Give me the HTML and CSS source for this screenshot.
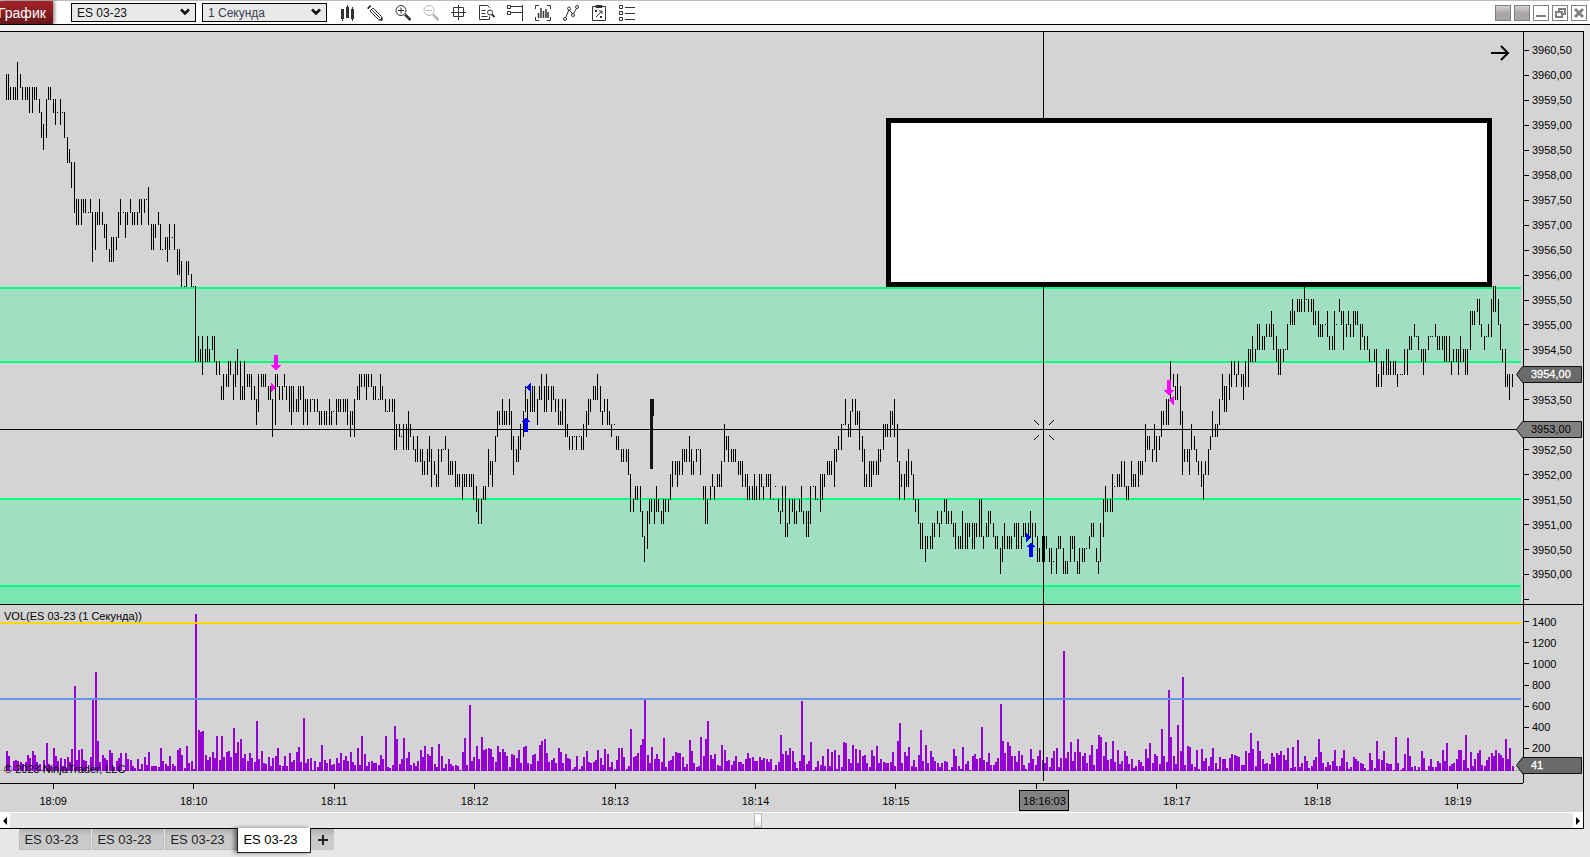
FILE: index.html
```html
<!DOCTYPE html>
<html lang="ru">
<head>
  <meta charset="UTF-8">
  <title>График ES 03-23</title>
  <link rel="stylesheet" href="styles.css">
</head>
<body>

<header class="toolbar">
  <span class="app-label">График</span>
  <div class="select">
    <select aria-label="Инструмент"><option>ES 03-23</option></select>
    <svg width="10" height="8" viewBox="0 0 10 8"><path d="M1 1.5l4 4 4-4" fill="none" stroke="#111" stroke-width="2.6"/></svg>
  </div>
  <div class="select select-interval">
    <select aria-label="Интервал"><option>1 Секунда</option></select>
    <svg width="10" height="8" viewBox="0 0 10 8"><path d="M1 1.5l4 4 4-4" fill="none" stroke="#111" stroke-width="2.6"/></svg>
  </div>

  <nav class="tools">
    <button title="Стиль графика"><svg viewBox="0 0 16 16"><path fill="#333" d="M2 4h3v10H4v2H3v-2H2zM7 2h1V0h1v2h1v11H7zM12 4h1V2h1v2h1v10h-1v2h-1v-2h-1z"/></svg></button>
    <button title="Рисование"><svg viewBox="0 0 16 16"><path d="M1 4l3-3M3 6l3-3M3 6l8.500 8.500 3.500.5-.5-3.500L6 3M4.500 4.500l8.500 8.500" fill="none" stroke="#333"/><path d="M0 3l3-3 1 1-3 3zM12 15.500l3.700.2-.2-3.700z" fill="#333"/></svg></button>
    <button title="Увеличить"><svg viewBox="0 0 16 16" fill="none" stroke="#333"><circle cx="6" cy="5.500" r="5"/><path d="M3 5.500h6M6 2.500v6" /><path d="M10 9.500l5.500 5.500" stroke-width="2.500"/></svg></button>
    <button title="Уменьшить" disabled><svg viewBox="0 0 16 16" fill="none" stroke="#b4b4b4"><circle cx="6" cy="5.500" r="5"/><path d="M3 5.500h6"/><path d="M10 9.500l5.500 5.500" stroke-width="2.500"/></svg></button>
    <button title="Перекрестие"><svg viewBox="0 0 16 16" fill="none" stroke="#333"><path d="M2.500 2.500h10v9h-10zM0 7.500h15M7.500 0v15"/></svg></button>
    <button title="Данные"><svg viewBox="0 0 16 16" fill="none" stroke="#333"><path d="M10.500 3V2.500l-2-2h-8v14h10v-3M2.500 5.500h4M2.500 8.500h4M2.500 11.500h6"/><circle cx="11" cy="7.500" r="2.500"/><path d="M13 9.500l2.500 2.500" stroke-width="2"/></svg></button>
    <button title="Шкала"><svg viewBox="0 0 16 16" fill="none" stroke="#333"><path d="M.5.5h3v3h-3zM.5 6.500h3v3h-3zM4 1.500h12M4 7.500h12M15.500 0v16"/></svg></button>
    <button title="Индикаторы"><svg viewBox="0 0 16 16" fill="none" stroke="#333"><path d="M4 .5H.5V4M12 .5h3.500V4M.5 12v3.500H4M15.500 12v3.500H12"/><path d="M3.500 13V8M6 13V3M8.500 13V6M11 13V4M13 13V7" stroke-width="1.500"/></svg></button>
    <button title="Стратегии"><svg viewBox="0 0 16 16" fill="none" stroke="#333"><path d="M2.500 13L6 4.500l4 5 4-7"/><g fill="#fff"><circle cx="2" cy="14" r="1.500"/><circle cx="6" cy="3.500" r="1.500"/><circle cx="10" cy="10" r="1.500"/><circle cx="14" cy="2" r="1.500"/></g></svg></button>
    <button title="Трейдер"><svg viewBox="0 0 16 16" fill="none" stroke="#333"><path d="M1.500 1.500h13v14h-13zM5 .5h6v2H5zM4 5l2 2M6 5L4 7M8 6l3 0 0 3M11 6L5 12M9 11l2 2M11 11l-2 2"/></svg></button>
    <button title="Свойства"><svg viewBox="0 0 16 16" fill="none" stroke="#333"><path d="M.5.500h3v3h-3zM.5 6.500h3v3h-3zM.5 12.500h3v3h-3zM6 2.500h10M6 8.500h10M6 14.500h10"/></svg></button>
  </nav>

  <div class="window-buttons">
    <button class="filled" title="Связь инструмента"></button>
    <button class="filled" title="Связь интервала"></button>
    <button title="Свернуть"><svg viewBox="0 0 14 14"><path d="M2 10h10" stroke="#808080" stroke-width="2"/></svg></button>
    <button title="Развернуть"><svg viewBox="0 0 14 14" fill="none" stroke="#808080" stroke-width="2"><path d="M6 5V3h6v5H9M3 6h6v5H3z"/></svg></button>
    <button title="Закрыть"><svg viewBox="0 0 14 14"><path d="M3 3l8 8M11 3l-8 8" stroke="#808080" stroke-width="3"/></svg></button>
  </div>
</header>

<main class="chart">
  <section class="panel price-panel">
    <div class="plot">
      <svg viewBox="0 0 1523 572" preserveAspectRatio="none" shape-rendering="crispEdges">
        <!-- zones -->
        <path fill="#a0dfc1" d="M0 255h1521v75H0zM0 466h1521v88H0z"/>
        <path fill="#7be7b0" d="M0 555h1521v17H0z"/>
        <path fill="#00ff7f" d="M0 255h1521v2H0zM0 329h1521v2H0zM0 466h1521v2H0zM0 553h1521v2H0z"/>
        <path id="priceBars"/>
        <path fill="#141414" d="M650 367h4v17h-1v53h-3z"/>
        <!-- crosshair -->
        <path d="M0 397h1518v1H0zM1043 0h1v572h-1z"/>
        <path d="M1034 388l5 5M1054 388l-5 5M1034 408l5-5M1054 408l-5-5" stroke="#000"/>
        <!-- trades -->
        <g fill="#f0f">
          <path d="M274 323h4v10h3l-5 5-5-5h3zM271 350l5 5-5 5z"/>
          <path d="M1167 348h4v10h3l-5 5-5-5h3zM1174 363l-5 5 5 5z"/>
        </g>
        <g fill="#00f">
          <path d="M524 400h4v-10h3l-5-5-5 5h3zM531 350l-5 5 5 5z"/>
          <path d="M1029 525h4v-10h3l-5-5-5 5h3zM1026 500l5 5-5 5z"/>
        </g>
        <rect x="888.500" y="88.500" width="601" height="164" fill="#fff" stroke="#000" stroke-width="5"/>
        <path d="M1491 21h17M1501 14l7 7-7 7" fill="none" stroke="#000" stroke-width="2" shape-rendering="auto"/>
      </svg>
    </div>
    <div class="axis price-axis">
      <ul>
        <li>3960,50</li><li>3960,00</li><li>3959,50</li><li>3959,00</li><li>3958,50</li><li>3958,00</li>
        <li>3957,50</li><li>3957,00</li><li>3956,50</li><li>3956,00</li><li>3955,50</li><li>3955,00</li>
        <li>3954,50</li><li></li><li>3953,50</li><li></li><li>3952,50</li><li>3952,00</li>
        <li>3951,50</li><li>3951,00</li><li>3950,50</li><li>3950,00</li><li></li>
      </ul>
      <div class="tag tag-last"><svg viewBox="0 0 66 17"><path d="M.5 8.500l6-8h59v16h-59z"/></svg><span>3954,00</span></div>
      <div class="tag tag-cursor"><svg viewBox="0 0 66 17"><path d="M.5 8.500l6-8h59v16h-59z"/></svg><span>3953,00</span></div>
    </div>
  </section>

  <section class="panel volume-panel">
    <div class="plot">
      <svg viewBox="0 0 1523 178" preserveAspectRatio="none" shape-rendering="crispEdges">
        <path fill="#aaa" d="M0 165h1521v1H0z"/>
        <path id="volumeBars" fill="#9400d3"/>
        <path fill="#ffd700" d="M0 17h1521v2H0z"/>
        <path fill="#6495ed" d="M0 93h1521v2H0z"/>
        <path d="M1043 0h1v176h-1z"/>
      </svg>
      <span class="indicator-name">VOL(ES 03-23 (1 Секунда))</span>
      <span class="copyright">© 2023 NinjaTrader, LLC</span>
    </div>
    <div class="axis volume-axis">
      <ul>
        <li>1400</li><li>1200</li><li>1000</li><li>800</li><li>600</li><li>400</li><li>200</li><li></li>
      </ul>
      <div class="tag tag-volume"><svg viewBox="0 0 66 17"><path d="M.5 8.500l6-8h59v16h-59z"/></svg><span>41</span></div>
    </div>
  </section>

  <div class="time-axis">
    <ul>
      <li>18:09</li><li>18:10</li><li>18:11</li><li>18:12</li><li>18:13</li><li>18:14</li>
      <li>18:15</li><li></li><li>18:17</li><li>18:18</li><li>18:19</li>
    </ul>
    <span class="time-cursor">18:16:03</span>
  </div>

  <div class="scrollbar">
    <button title="Назад"><svg viewBox="0 0 10 14"><path d="M7 3v8L3 7z"/></svg></button>
    <div class="track"><div class="thumb"></div></div>
    <button title="Вперёд"><svg viewBox="0 0 10 14"><path d="M3 3v8l4-4z"/></svg></button>
  </div>
</main>

<footer class="tabs">
  <button>ES 03-23</button>
  <button>ES 03-23</button>
  <button>ES 03-23</button>
  <button class="active">ES 03-23</button>
  <button class="add" title="Новая вкладка"><svg viewBox="0 0 10 10"><path d="M0 5h10M5 0v10" stroke="#222" stroke-width="2"/></svg></button>
</footer>

<script src="chart.js"></script>
</body>
</html>
```
FILE: styles.css
```css
* {
  box-sizing: border-box;
}
body {
  margin: 0;
  height: 100vh;
  display: flex;
  flex-direction: column;
  overflow: hidden;
  background: #e6e7e9;
  color: #000;
  font-family: "Liberation Sans", Arial, sans-serif;
  font-size: 11px;
}
button {
  padding: 0;
  border: none;
  background: none;
  font-family: inherit;
  color: inherit;
}
ul {
  list-style: none;
  margin: 0;
  padding: 0;
}
svg {
  display: block;
}

/* toolbar */
.toolbar {
  flex: none;
  height: 25px;
  display: flex;
  align-items: center;
  background: #fff;
  border-top: 1px solid #bcbcbc;
  border-bottom: 1px solid #000;
}
.app-label {
  width: 53px;
  height: 23px;
  margin-right: 18px;
  line-height: 24px;
  font-size: 14px;
  color: #fff;
  text-indent: -2px;
  background: linear-gradient(#a52327, #67171a);
  box-shadow: 2px 0 3px rgba(0,0,0,0.4);
}
.select {
  position: relative;
  width: 125px;
  height: 19px;
  margin-right: 6px;
}
.select select {
  width: 100%;
  height: 100%;
  padding: 0 5px;
  border: 1px solid #000;
  border-radius: 0;
  appearance: none;
  background: #e8eaea;
  color: #111;
  font-family: inherit;
  font-size: 12px;
}
.select-interval select {
  color: #3c3c50;
}
.select svg {
  position: absolute;
  right: 6px;
  top: 5px;
  pointer-events: none;
}
.tools {
  display: flex;
}
.tools button {
  width: 28px;
  height: 16px;
}
.tools svg {
  width: 16px;
  height: 16px;
  margin: 0 auto;
}
.window-buttons {
  display: flex;
  gap: 3px;
  margin-left: auto;
  margin-right: 3px;
}
.window-buttons button {
  width: 16px;
  height: 16px;
  border: 1px solid #808080;
}
.window-buttons .filled {
  background: linear-gradient(#d6d4d4, #aaa6a6 50%);
}

/* chart */
.chart {
  flex: 1;
  min-height: 0;
  display: flex;
  flex-direction: column;
  margin: 6px 6px 0 0;
  border: 1px solid #000;
  border-left: none;
  background: #d4d4d4;
  box-shadow: 0 -6px 0 #f0f1f1;
}
.panel {
  display: grid;
  grid-template-columns: 1fr 60px;
  min-height: 0;
}
.price-panel {
  flex: 573;
  border-bottom: 1px solid #000;
}
.volume-panel {
  flex: 179;
}
.plot {
  position: relative;
  min-height: 0;
}
.plot svg {
  width: 100%;
  height: 100%;
}
.volume-panel .plot {
  border-bottom: 1px solid #000;
}
.indicator-name,
.copyright {
  position: absolute;
  left: 4px;
  line-height: 14px;
}
.indicator-name {
  top: 4px;
}
.copyright {
  bottom: 7px;
}

/* price and volume scales */
.axis {
  position: relative;
  min-height: 0;
  border-left: 1px solid #000;
}
.axis ul {
  height: 100%;
  display: flex;
  flex-direction: column;
}
.axis li {
  flex: 1;
  display: flex;
  align-items: center;
}
.axis li::before {
  content: "";
  width: 5px;
  height: 1px;
  margin-right: 3px;
  background: #000;
}
.price-axis ul {
  padding-top: 6px;
  margin-bottom: -8px;
  height: 580px;
}
.volume-axis ul {
  padding: 6px 0 3px;
}
.volume-axis {
  margin-bottom: 1px;
}
.tag {
  position: absolute;
  right: 1px;
  width: 66px;
  height: 17px;
}
.tag svg {
  position: absolute;
  fill: #6a6a6a;
  stroke: #111;
}
.tag span {
  position: relative;
  display: block;
  padding-left: 15px;
  line-height: 17px;
}
.tag-last {
  top: 334px;
  color: #fff;
}
.tag-cursor {
  top: 389px;
}
.tag-cursor svg {
  fill: #828282;
}
.tag-volume {
  bottom: 9px;
  color: #fff;
}
.tag-last span,
.tag-volume span {
  -webkit-text-stroke: 0.3px #fff;
}

/* time scale */
.time-axis {
  position: relative;
  flex: none;
  height: 28px;
  overflow: hidden;
}
.time-axis ul {
  display: grid;
  grid-template-columns: repeat(11, 1fr);
  margin: 0 55px 0 -17px;
}
.time-axis li {
  display: flex;
  flex-direction: column;
  align-items: center;
  line-height: 14px;
}
.time-axis li::before {
  content: "";
  width: 1px;
  height: 5px;
  margin-bottom: 5px;
  background: #000;
}
.time-cursor {
  position: absolute;
  left: 64.400%;
  top: 6px;
  width: 50px;
  height: 21px;
  line-height: 20px;
  text-align: center;
  border: 1px solid #000;
  background: #828282;
}

.scrollbar {
  flex: none;
  height: 16px;
  display: flex;
  border-top: 1px solid #fff;
  background: #e4e4e4;
}
.scrollbar button {
  width: 10px;
  background: #fff;
}
.track {
  flex: 1;
}
.thumb {
  width: 8px;
  height: 15px;
  margin-left: 47.600%;
  border: 1px solid #b8b8b8;
  background: linear-gradient(#fff 45%, #dcdcdc);
}

/* tabs */
.tabs {
  flex: none;
  height: 28px;
  display: flex;
  align-items: flex-start;
  gap: 1px;
  padding-left: 19px;
}
.tabs button {
  width: 72px;
  height: 21px;
  padding-right: 7px;
  font-size: 13px;
  color: #222;
  background: linear-gradient(#b0b0b0, #cacaca 35%);
  border: 1px solid #bbb;
  border-top: none;
}
.tabs .active {
  position: relative;
  width: 74px;
  height: 25px;
  margin: -1px 0 0 -1px;
  padding-bottom: 2px;
  color: #000;
  background: #fff;
  border: 1px solid #222;
  border-top: none;
  box-shadow: -3px 0 4px rgba(0,0,0,0.45);
}
.tabs .add {
  width: 23px;
  margin-left: -1px;
  padding: 0;
  border: none;
}
.add svg {
  width: 10px;
  height: 10px;
  margin: 0 auto;
}
```
FILE: chart.js
```js
// one bar per second, high-low in ticks down from 3960,50 (30 bars per line)
const bars = `
2-4 2-4 3-4 3-4 3-4 1-4 2-3 3-4 3-4 3-4 3-5 3-5 3-4 3-4 4-5 5-7 6-8 4-7 3-4 3-4 4-5 4-6 5-5 4-6 5-5 5-7 7-9 8-9 9-11 9-13
12-14 12-14 12-14 12-13 12-13 13-13 12-13 13-17 13-16 13-14 12-14 13-14 14-15 14-16 16-17 15-17 15-17 15-16 13-15 12-14 13-13 13-15 13-14 12-13 13-14 13-14 13-14 12-13 12-14 12-13
12-12 11-14 14-16 14-16 14-15 13-14 14-16 16-16 15-16 15-17 14-16 15-15 14-16 16-18 16-18 17-19 19-19 17-19 17-18 18-19 19-19 19-25 23-25 24-25 23-26 24-25 23-25 24-25 23-24 23-25
25-26 25-26 27-28 26-28 26-27 25-27 25-26 26-28 25-27 24-26 25-28 27-28 25-28 26-27 26-27 26-28 27-28 28-30 26-29 26-27 26-27 26-27 27-28 27-28 28-31 26-30 26-27 27-28 27-28 26-27
27-28 27-29 27-30 27-29 28-29 27-29 27-28 27-30 28-29 28-30 28-29 28-28 28-29 28-29 29-30 29-30 29-30 29-30 28-30 29-30 29-29 28-30 28-29 28-29 28-29 28-29 28-30 29-31 29-30 28-31
27-28 26-28 26-27 26-27 26-28 26-27 26-27 27-28 27-28 28-28 26-28 27-28 28-29 29-29 28-29 28-29 28-32 30-32 30-31 31-31 30-32 30-32 29-32 30-31 31-32 32-33 31-33 32-33 32-34 33-34
32-34 31-33 32-35 33-34 34-35 32-35 32-33 32-32 31-32 32-34 33-34 33-34 33-35 34-35 34-35 34-36 34-35 34-35 34-35 34-35 34-36 35-37 36-38 36-38 35-36 35-36 32-35 33-34 33-35 31-33
29-31 29-30 28-30 29-30 29-30 28-30 29-32 31-34 32-33 31-33 30-32 29-31 27-29 28-30 27-29 27-29 27-29 28-30 27-28 26-28 27-29 26-29 27-28 27-29 27-28 28-29 28-30 29-30 28-30 28-31
30-31 31-32 31-32 31-31 31-32 31-31 31-32 30-32 29-31 28-30 28-29 27-28 27-28 26-28 27-29 29-30 28-29 28-30 29-30 30-31 30-30 31-32 31-32 32-33 32-33 32-33 32-34 34-37 36-37 35-36
35-36 35-37 37-39 39-41 37-40 36-38 36-37 36-38 35-37 36-37 37-38 36-38 36-37 36-37 34-36 33-35 33-34 33-35 33-34 32-34 32-33 32-33 31-33 32-34 33-34 32-33 32-32 32-34 35-36 35-38
36-38 35-36 34-35 35-36 34-35 34-35 33-35 30-33 31-32 31-33 32-33 32-33 32-33 33-34 33-34 33-35 34-35 34-36 35-36 35-36 34-36 35-36 34-36 34-35 35-36 34-35 34-35 34-36 36-36 35-35
36-37 37-38 35-37 35-39 38-39 36-38 36-37 36-38 37-38 36-37 35-37 37-38 37-39 37-39 35-38 35-35 35-36 36-36 34-37 34-36 34-35 33-34 33-34 33-34 32-35 32-33 31-32 30-32 30-30 28-30
30-31 29-31 28-29 28-30 29-30 29-32 31-33 32-35 34-35 33-35 33-35 33-34 33-34 32-34 32-33 30-32 30-31 30-31 29-31 29-30 28-31 30-33 33-36 34-35 34-36 33-35 32-35 33-34 34-36 36-37
36-38 38-40 38-40 39-41 39-40 39-40 38-40 38-39 37-38 38-39 37-38 36-37 36-38 37-38 37-38 38-39 38-40 39-40 39-40 37-40 38-40 38-40 38-39 38-40 38-40 38-39 36-39 36-39 39-40 38-39
37-39 37-38 38-39 39-40 39-40 40-42 39-41 38-40 39-40 39-40 39-40 38-39 38-40 38-40 39-40 38-39 38-39 38-39 37-39 38-40 38-39 39-41 40-41 39-41 39-41 39-40 40-41 40-42 41-41 40-42
39-40 39-40 40-42 41-42 41-42 39-41 39-40 39-41 41-42 40-42 40-41 40-41 40-40 39-40 38-39 38-39 40-41 41-42 38-41 36-39 35-37 36-37 36-37 34-37 35-35 34-35 34-35 33-35 33-35 35-36
35-36 33-35 34-35 34-35 33-35 33-34 33-34 30-33 31-32 31-32 32-33 30-32 31-33 31-32 29-31 29-30 28-30 28-30 25-28 26-27 27-28 26-28 27-30 29-34 32-33 32-33 32-34 30-32 31-32 32-33
33-34 33-35 34-36 33-34 32-34 31-32 29-31 30-31 30-31 28-30 26-28 27-29 27-29 26-28 25-27 25-26 26-27 25-26 26-27 26-28 25-27 24-27 24-25 23-25 24-25 22-24 22-24 23-24 23-24 22-23
22-23 21-23 22-24 23-25 24-26 24-26 24-25 24-24 22-24 21-22 20-22 21-22 20-21 20-21 20-21 19-21 20-20 20-21 20-21 20-22 21-22 21-23 22-23 22-23 22-22 21-23 23-24 23-24 21-24 22-22
20-21 21-22 21-24 22-23 21-22 22-23 21-23 21-22 21-22 22-24 22-23 23-24 23-24 24-25 25-25 24-25 24-27 26-27 25-27 25-26 24-26 24-26 25-26 25-26 25-26 26-27 26-26 26-26 24-26 24-26
23-24 23-24 22-23 23-23 23-24 24-25 24-26 24-25 23-24 23-23 23-23 22-23 23-24 23-24 23-24 23-25 23-25 23-25 25-26 24-25 24-25 24-26 23-25 24-25 24-26 24-26 21-24 21-22 21-22 20-21
20-22 22-23 23-24 23-23 22-23 20-23 19-21 19-21 20-22 22-24 24-25 24-27 26-27 26-28 26-27
`;

// bar heights of the volume panel
const volume = `
20 15 0 10 11 10 9 7 9 16 13 20 16 9 7 1 11 28 7 5 23 15 10 13 5 12 14 9 22 86
11 21 22 11 10 1 14 73 100 30 9 16 13 11 21 18 4 10 13 18 1 18 12 11 5 3 12 2 7 14
6 19 5 5 5 4 23 10 7 5 15 7 5 21 23 16 3 25 8 10 2 159 42 40 41 16 11 14 19 13
36 11 35 14 19 20 14 44 18 29 32 13 17 10 18 13 9 51 12 20 8 7 14 5 13 15 23 6 5 15
5 18 9 11 19 24 9 54 8 12 13 1 10 4 9 26 11 8 12 6 7 13 8 18 11 15 10 19 9 6
23 6 36 17 5 9 10 8 8 6 16 12 36 4 3 6 46 32 7 12 33 13 19 6 8 5 10 21 14 25
17 15 24 7 4 27 15 3 7 12 7 5 6 5 1 19 33 6 67 10 14 25 12 34 21 22 23 22 14 9
25 19 22 19 15 4 17 16 13 21 8 24 25 8 7 16 17 10 26 30 32 18 9 11 13 8 23 19 8 17
13 12 2 4 15 2 5 14 20 9 8 9 11 21 13 6 22 17 4 9 2 11 23 23 14 2 5 43 14 15
18 26 32 72 16 8 24 12 17 12 9 33 4 10 11 15 19 18 18 14 4 7 31 20 8 4 5 34 15 32
51 16 12 17 6 5 26 21 10 11 6 10 15 9 9 7 12 18 13 14 10 10 14 11 13 12 9 12 1 6
9 37 17 20 16 23 20 9 3 10 71 16 7 10 29 1 4 10 6 15 5 22 5 19 21 2 16 4 29 28
12 8 26 22 8 21 15 16 8 4 21 15 25 8 12 9 8 8 9 19 5 30 49 8 19 15 24 5 11 4
16 42 10 26 8 20 14 10 8 4 8 10 9 1 4 22 15 5 2 24 7 10 1 15 17 12 13 45 11 9
18 6 6 9 13 68 30 18 29 25 15 15 9 20 16 6 2 8 22 12 6 15 21 11 8 14 4 13 20 23
4 13 122 13 19 29 10 19 32 19 15 18 8 16 26 6 22 37 34 15 29 11 12 30 9 21 7 10 20 15
7 12 3 5 11 9 5 22 13 28 8 17 15 7 43 15 9 82 34 15 7 47 20 95 6 25 24 7 4 21
2 22 10 13 5 14 23 8 2 14 12 12 3 13 17 16 15 14 6 6 20 18 39 22 5 30 20 12 7 8
7 18 14 18 16 20 16 11 23 3 24 4 31 4 8 15 10 3 5 11 14 32 19 8 4 9 6 10 21 5
5 13 21 9 2 4 14 12 10 8 7 3 1 18 11 3 30 12 11 20 8 7 7 1 34 8 1 3 17 33
15 4 5 1 4 20 13 1 5 12 4 4 10 8 21 10 28 5 7 8 12 21 21 11 37 3 19 5 12 18
21 6 5 11 14 18 15 21 18 16 13 32 12 23 5
`;

const STEP = 2.3385;
const TICK = 12.476;
const VOLUME_SCALE = 0.986;

function barX(i) {
  return 6 + Math.floor(i * STEP + 0.3);
}

function levelY(level) {
  return Math.floor(17.9 + level * TICK);
}

const pricePath = bars.trim().split(/\s+/).map((bar, i) => {
  const [high, low] = bar.split('-').map(Number);
  const top = levelY(high);
  return `M${barX(i)} ${top}h1V${levelY(low) + 1}h-1z`;
});
document.getElementById('priceBars').setAttribute('d', pricePath.join(''));

const volumePath = volume.trim().split(/\s+/).map((v, i) => {
  const h = Math.round(v * VOLUME_SCALE);
  return `M${barX(i)} 166h2v-${h}h-2z`;
});
document.getElementById('volumeBars').setAttribute('d', volumePath.join(''));
```
